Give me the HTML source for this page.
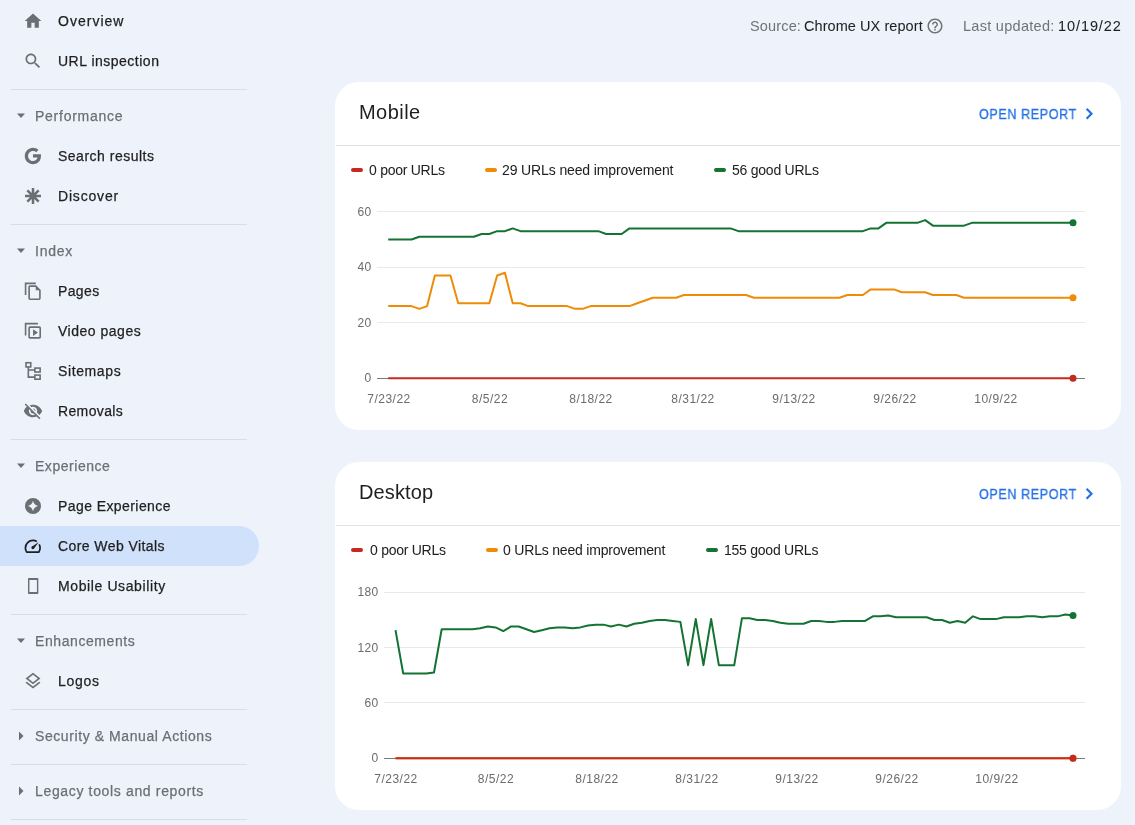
<!DOCTYPE html>
<html><head><meta charset="utf-8"><style>
html,body{margin:0;padding:0;width:1135px;height:825px;overflow:hidden;background:#eef3fb;font-family:"Liberation Sans", sans-serif;}
.t{position:absolute;white-space:pre;will-change:transform;}
.s{stroke:inherit}
</style></head><body>
<div style="position:absolute;left:0px;top:526px;width:259px;height:40px;background:#d0e1fc;border-radius:0 20px 20px 0"></div>
<div style="position:absolute;left:11px;top:89px;width:236px;height:1px;background:#dcdde1"></div>
<div style="position:absolute;left:11px;top:224px;width:236px;height:1px;background:#dcdde1"></div>
<div style="position:absolute;left:11px;top:439px;width:236px;height:1px;background:#dcdde1"></div>
<div style="position:absolute;left:11px;top:614px;width:236px;height:1px;background:#dcdde1"></div>
<div style="position:absolute;left:11px;top:709px;width:236px;height:1px;background:#dcdde1"></div>
<div style="position:absolute;left:11px;top:764px;width:236px;height:1px;background:#dcdde1"></div>
<div style="position:absolute;left:11px;top:819px;width:236px;height:1px;background:#dcdde1"></div>
<svg style="position:absolute;left:23px;top:11px;" width="20" height="20" viewBox="0 0 20 20"><g transform="scale(0.8333)" fill="#6b6e72" stroke="#6b6e72" stroke-width="0"><path d="M10 20v-6h4v6h5v-8h3L12 3 2 12h3v8z"/></g></svg>
<div class="t" style="left:58.40px;top:14.15px;font-size:14px;line-height:14px;color:#1f1f1f;font-weight:400;letter-spacing:1.014px;-webkit-text-stroke:0.25px #1f1f1f;">Overview</div>
<svg style="position:absolute;left:23px;top:51px;" width="20" height="20" viewBox="0 0 20 20"><g transform="scale(0.8333)" fill="#6b6e72" stroke="#6b6e72" stroke-width="0"><path d="M15.5 14h-.79l-.28-.27C15.41 12.59 16 11.11 16 9.5 16 5.91 13.09 3 9.5 3S3 5.91 3 9.5 5.91 16 9.5 16c1.61 0 3.09-.59 4.23-1.57l.27.28v.79l5 4.99L20.49 19l-4.99-5zm-6 0C7.01 14 5 11.99 5 9.5S7.01 5 9.5 5 14 7.01 14 9.5 11.99 14 9.5 14z"/></g></svg>
<div class="t" style="left:58.40px;top:54.15px;font-size:14px;line-height:14px;color:#1f1f1f;font-weight:400;letter-spacing:0.5px;-webkit-text-stroke:0.25px #1f1f1f;">URL inspection</div>
<svg style="position:absolute;left:23px;top:146px;" width="20" height="20" viewBox="0 0 20 20"><g transform="scale(0.8333)" fill="#6b6e72" stroke="#6b6e72" stroke-width="0"><g transform="translate(11.85 12) scale(1.1) translate(-11.85 -12)"><path d="M20.6 10.2H12v3.4h4.9c-.5 2.4-2.5 3.9-4.9 3.9-3 0-5.4-2.5-5.4-5.5S9 6.5 12 6.5c1.4 0 2.6.5 3.5 1.3l2.5-2.5C16.4 3.9 14.3 3 12 3 7 3 3 7 3 12s4 9 9 9c4.5 0 8.7-3.3 8.7-9 0-.6-.1-1.2-.1-1.8z"/></g></g></svg>
<div class="t" style="left:58.40px;top:149.15px;font-size:14px;line-height:14px;color:#1f1f1f;font-weight:400;letter-spacing:0.5px;-webkit-text-stroke:0.25px #1f1f1f;">Search results</div>
<svg style="position:absolute;left:23px;top:186px;" width="20" height="20" viewBox="0 0 20 20"><g transform="scale(0.8333)" fill="#6b6e72" stroke="#6b6e72" stroke-width="0"><g stroke-width="3" stroke-linecap="butt" fill="none" class="s"><path d="M12 2.4v19.2M2.4 12h19.2M5.2 5.2l13.6 13.6M18.8 5.2L5.2 18.8"/></g><circle cx="12" cy="12" r="3.4"/></g></svg>
<div class="t" style="left:58.40px;top:189.15px;font-size:14px;line-height:14px;color:#1f1f1f;font-weight:400;letter-spacing:0.814px;-webkit-text-stroke:0.25px #1f1f1f;">Discover</div>
<svg style="position:absolute;left:23px;top:281px;" width="20" height="20" viewBox="0 0 20 20"><g transform="scale(0.8333)" fill="#6b6e72" stroke="#6b6e72" stroke-width="0"><g fill="none" class="s" stroke-width="1.95"><path d="M3.1 16.7V2.9h12.3"/><path d="M8.35 6.15H15.3L20.3 11.15V20.85A1 1 0 0 1 19.3 21.85H8.35A1 1 0 0 1 7.35 20.85V7.15A1 1 0 0 1 8.35 6.15z"/></g><path d="M15.3 6.15L20.3 11.15H15.3z"/></g></svg>
<div class="t" style="left:58.40px;top:284.15px;font-size:14px;line-height:14px;color:#1f1f1f;font-weight:400;letter-spacing:0.375px;-webkit-text-stroke:0.25px #1f1f1f;">Pages</div>
<svg style="position:absolute;left:23px;top:321px;" width="20" height="20" viewBox="0 0 20 20"><g transform="scale(0.8333)" fill="#6b6e72" stroke="#6b6e72" stroke-width="0"><g fill="none" class="s" stroke-width="1.95"><path d="M3.1 17.5V3.2h14.8"/><rect x="7.35" y="7.35" width="13.3" height="12.9" rx="1"/></g><path d="M12.1 9.8V18L17.9 13.9z"/></g></svg>
<div class="t" style="left:58.40px;top:324.15px;font-size:14px;line-height:14px;color:#1f1f1f;font-weight:400;letter-spacing:0.51px;-webkit-text-stroke:0.25px #1f1f1f;">Video pages</div>
<svg style="position:absolute;left:23px;top:361px;" width="20" height="20" viewBox="0 0 20 20"><g transform="scale(0.8333)" fill="#6b6e72" stroke="#6b6e72" stroke-width="0"><g fill="none" class="s" stroke-width="1.9"><rect x="3.6" y="2.1" width="5.7" height="5.0"/><rect x="14.25" y="8.5" width="6.3" height="4.7"/><rect x="14.25" y="16.9" width="6.3" height="4.95"/><path d="M6.4 7.1V19.4h7.85M6.4 10.85h7.85"/></g></g></svg>
<div class="t" style="left:58.40px;top:364.15px;font-size:14px;line-height:14px;color:#1f1f1f;font-weight:400;letter-spacing:0.614px;-webkit-text-stroke:0.25px #1f1f1f;">Sitemaps</div>
<svg style="position:absolute;left:23px;top:401px;" width="20" height="20" viewBox="0 0 20 20"><g transform="scale(0.8333)" fill="#6b6e72" stroke="#6b6e72" stroke-width="0"><path d="M12 7c2.76 0 5 2.24 5 5 0 .65-.13 1.26-.36 1.83l2.92 2.92c1.51-1.26 2.7-2.89 3.43-4.75-1.730-4.39-6-7.5-11-7.5-1.4 0-2.74.25-3.98.7l2.16 2.16C10.74 7.13 11.35 7 12 7zM2 4.27l2.28 2.28.46.46C3.08 8.3 1.78 10.02 1 12c1.73 4.39 6 7.5 11 7.5 1.55 0 3.03-.3 4.38-.84l.42.42L19.73 22 21 20.73 3.27 3 2 4.270zM7.53 9.8l1.55 1.55c-.05.21-.08.43-.08.65 0 1.66 1.34 3 3 3 .22 0 .44-.03.65-.08l1.55 1.55c-.67.33-1.41.53-2.2.53-2.76 0-5-2.24-5-5 0-.79.2-1.53.53-2.2zm4.31-.78l3.15 3.15.02-.16c0-1.66-1.34-3-3-3l-.17.01z"/></g></svg>
<div class="t" style="left:58.40px;top:404.15px;font-size:14px;line-height:14px;color:#1f1f1f;font-weight:400;letter-spacing:0.357px;-webkit-text-stroke:0.25px #1f1f1f;">Removals</div>
<svg style="position:absolute;left:23px;top:496px;" width="20" height="20" viewBox="0 0 20 20"><g transform="scale(0.8333)" fill="#6b6e72" stroke="#6b6e72" stroke-width="0"><path fill-rule="evenodd" d="M12 2.4a9.6 9.6 0 1 0 0 19.2 9.6 9.6 0 0 0 0-19.2zM12 5.7C12.9 9.3 14.7 11.1 18.3 12C14.7 12.9 12.9 14.7 12 18.3C11.1 14.7 9.3 12.9 5.7 12C9.3 11.1 11.1 9.3 12 5.7z"/></g></svg>
<div class="t" style="left:58.40px;top:499.15px;font-size:14px;line-height:14px;color:#1f1f1f;font-weight:400;letter-spacing:0.421px;-webkit-text-stroke:0.25px #1f1f1f;">Page Experience</div>
<svg style="position:absolute;left:23px;top:536px;" width="20" height="20" viewBox="0 0 20 20"><g transform="scale(0.8333)" fill="#1f1f1f" stroke="#1f1f1f" stroke-width="0"><g fill="none" class="s" stroke-width="2.1"><path d="M4.5 19.5a8 8 0 0 1-1.6-5A9.1 9.1 0 0 1 12 5.4c1.7 0 3.2.4 4.5 1.2M19.4 10c.7 1.3 1.1 2.8 1.1 4.5 0 1.9-.6 3.6-1.6 5H4.5"/></g><circle cx="11.8" cy="14.1" r="1.75"/><path d="M10.57 12.84L18.9 7.2L13.03 15.36z"/></g></svg>
<div class="t" style="left:58.40px;top:539.15px;font-size:14px;line-height:14px;color:#1f1f1f;font-weight:400;letter-spacing:0.414px;-webkit-text-stroke:0.25px #1f1f1f;">Core Web Vitals</div>
<svg style="position:absolute;left:23px;top:576px;" width="20" height="20" viewBox="0 0 20 20"><g transform="scale(0.8333)" fill="#6b6e72" stroke="#6b6e72" stroke-width="0"><path fill-rule="evenodd" d="M6.9 2.5H17.5A.9.9 0 0 1 18.4 3.4V20.8A.9.9 0 0 1 17.5 21.7H6.9A.9.9 0 0 1 6 20.8V3.4A.9.9 0 0 1 6.9 2.5zM7.7 4.9V19.3H16.7V4.9z"/></g></svg>
<div class="t" style="left:58.40px;top:579.15px;font-size:14px;line-height:14px;color:#1f1f1f;font-weight:400;letter-spacing:0.607px;-webkit-text-stroke:0.25px #1f1f1f;">Mobile Usability</div>
<svg style="position:absolute;left:23px;top:671px;" width="20" height="20" viewBox="0 0 20 20"><g transform="scale(0.8333)" fill="#6b6e72" stroke="#6b6e72" stroke-width="0"><path d="M11.99 18.54l-7.37-5.73L3 14.07l9 7 9-7-1.63-1.27-7.38 5.74zM12 16l7.36-5.73L21 9l-9-7-9 7 1.63 1.27L12 16zm0-11.47L17.74 9 12 13.47 6.26 9 12 4.53z"/></g></svg>
<div class="t" style="left:58.40px;top:674.15px;font-size:14px;line-height:14px;color:#1f1f1f;font-weight:400;letter-spacing:0.725px;-webkit-text-stroke:0.25px #1f1f1f;">Logos</div>
<svg style="position:absolute;left:16px;top:113px;" width="10" height="6" viewBox="0 0 10 6"><path d="M1 0.5h8L5 5z" fill="#6b6e72"/></svg>
<div class="t" style="left:34.50px;top:109.45px;font-size:14px;line-height:14px;color:#6b6f74;font-weight:400;letter-spacing:0.74px;-webkit-text-stroke:0.25px #6b6f74;">Performance</div>
<svg style="position:absolute;left:16px;top:248px;" width="10" height="6" viewBox="0 0 10 6"><path d="M1 0.5h8L5 5z" fill="#6b6e72"/></svg>
<div class="t" style="left:34.50px;top:244.45px;font-size:14px;line-height:14px;color:#6b6f74;font-weight:400;letter-spacing:0.75px;-webkit-text-stroke:0.25px #6b6f74;">Index</div>
<svg style="position:absolute;left:16px;top:463px;" width="10" height="6" viewBox="0 0 10 6"><path d="M1 0.5h8L5 5z" fill="#6b6e72"/></svg>
<div class="t" style="left:34.50px;top:459.45px;font-size:14px;line-height:14px;color:#6b6f74;font-weight:400;letter-spacing:0.533px;-webkit-text-stroke:0.25px #6b6f74;">Experience</div>
<svg style="position:absolute;left:16px;top:638px;" width="10" height="6" viewBox="0 0 10 6"><path d="M1 0.5h8L5 5z" fill="#6b6e72"/></svg>
<div class="t" style="left:34.50px;top:634.45px;font-size:14px;line-height:14px;color:#6b6f74;font-weight:400;letter-spacing:0.582px;-webkit-text-stroke:0.25px #6b6f74;">Enhancements</div>
<svg style="position:absolute;left:18px;top:731px;" width="7" height="10" viewBox="0 0 7 10"><path d="M1 0.5v9L5.5 5z" fill="#6b6e72"/></svg>
<div class="t" style="left:34.50px;top:729.45px;font-size:14px;line-height:14px;color:#6b6f74;font-weight:400;letter-spacing:0.583px;-webkit-text-stroke:0.25px #6b6f74;">Security &amp; Manual Actions</div>
<svg style="position:absolute;left:18px;top:786px;" width="7" height="10" viewBox="0 0 7 10"><path d="M1 0.5v9L5.5 5z" fill="#6b6e72"/></svg>
<div class="t" style="left:34.50px;top:784.45px;font-size:14px;line-height:14px;color:#6b6f74;font-weight:400;letter-spacing:0.652px;-webkit-text-stroke:0.25px #6b6f74;">Legacy tools and reports</div>
<div class="t" style="left:749.70px;top:18.53px;font-size:14.5px;line-height:14.5px;color:#6f7378;font-weight:400;letter-spacing:0.15px;-webkit-text-stroke:0px #6f7378;">Source:</div>
<div class="t" style="left:803.80px;top:18.53px;font-size:14.5px;line-height:14.5px;color:#1f1f1f;font-weight:400;letter-spacing:0.067px;-webkit-text-stroke:0.05px #1f1f1f;">Chrome UX report</div>
<svg style="position:absolute;left:926.1px;top:16.6px;" width="18" height="18" viewBox="0 0 18 18"><g transform="scale(0.75)" fill="#6f7378"><path d="M11 18h2v-2h-2v2zm1-16C6.480 2 2 6.48 2 12s4.48 10 10 10 10-4.48 10-10S17.52 2 12 2zm0 18c-4.41 0-8-3.59-8-8s3.59-8 8-8 8 3.59 8 8-3.59 8-8 8zm0-14c-2.21 0-4 1.79-4 4h2c0-1.1.9-2 2-2s2 .9 2 2c0 2-3 1.75-3 5h2c0-2.25 3-2.5 3-5 0-2.21-1.79-4-4-4z"/></g></svg>
<div class="t" style="left:963.30px;top:18.53px;font-size:14.5px;line-height:14.5px;color:#6f7378;font-weight:400;letter-spacing:0.283px;-webkit-text-stroke:0px #6f7378;">Last updated:</div>
<div class="t" style="left:1057.90px;top:18.53px;font-size:14.5px;line-height:14.5px;color:#1f1f1f;font-weight:400;letter-spacing:0.914px;-webkit-text-stroke:0.05px #1f1f1f;">10/19/22</div>
<div style="position:absolute;left:335px;top:82px;width:786px;height:348px;background:#ffffff;border-radius:24px"></div>
<div style="position:absolute;left:336px;top:145px;width:784px;height:1px;background:#e3e3e3"></div>
<div class="t" style="left:359.00px;top:101.97px;font-size:20px;line-height:20px;color:#1f1f1f;font-weight:400;letter-spacing:0.46px;-webkit-text-stroke:0px #1f1f1f;">Mobile</div>
<div class="t" style="left:979.10px;top:107.15px;font-size:14px;line-height:14px;color:#2370e8;font-weight:400;letter-spacing:0.65px;-webkit-text-stroke:0.25px #2370e8;-webkit-text-stroke:0.3px #2370e8;transform:scaleX(0.9);transform-origin:0 0">OPEN REPORT</div>
<svg style="position:absolute;left:1079px;top:104px;" width="16" height="20" viewBox="0 0 16 20"><path d="M7.6 4.7L12.5 9.75L7.6 14.8" fill="none" stroke="#2370e8" stroke-width="2.2"/></svg>
<div style="position:absolute;left:351px;top:168px;width:12px;height:4px;background:#c42a1f;border-radius:2px"></div>
<div class="t" style="left:369.00px;top:163.45px;font-size:14px;line-height:14px;color:#1f1f1f;font-weight:400;letter-spacing:-0.27px;-webkit-text-stroke:0.03px #1f1f1f;">0 poor URLs</div>
<div style="position:absolute;left:484.8px;top:168px;width:12px;height:4px;background:#ef8b06;border-radius:2px"></div>
<div class="t" style="left:502.10px;top:163.45px;font-size:14px;line-height:14px;color:#1f1f1f;font-weight:400;letter-spacing:-0.122px;-webkit-text-stroke:0.03px #1f1f1f;">29 URLs need improvement</div>
<div style="position:absolute;left:714.3px;top:168px;width:12px;height:4px;background:#137333;border-radius:2px"></div>
<div class="t" style="left:731.90px;top:163.45px;font-size:14px;line-height:14px;color:#1f1f1f;font-weight:400;letter-spacing:-0.236px;-webkit-text-stroke:0.03px #1f1f1f;">56 good URLs</div>
<svg style="position:absolute;left:0;top:0" width="1135" height="825" viewBox="0 0 1135 825"><rect x="377" y="378" width="708" height="1" fill="#7a7a7a"/><rect x="377" y="322" width="708" height="1" fill="#e9e9e9"/><rect x="377" y="267" width="708" height="1" fill="#e9e9e9"/><rect x="377" y="211" width="708" height="1" fill="#e9e9e9"/>
<polyline points="388.20,239.50 395.98,239.50 403.76,239.50 411.55,239.50 419.33,236.73 427.11,236.73 434.89,236.73 442.67,236.73 450.45,236.73 458.24,236.73 466.02,236.73 473.80,236.73 481.58,233.95 489.36,233.95 497.15,231.18 504.93,231.18 512.71,228.40 520.49,231.18 528.27,231.18 536.05,231.18 543.84,231.18 551.62,231.18 559.40,231.18 567.18,231.18 574.96,231.18 582.75,231.18 590.53,231.18 598.31,231.18 606.09,233.95 613.87,233.95 621.65,233.95 629.44,228.40 637.22,228.40 645.00,228.40 652.78,228.40 660.56,228.40 668.35,228.40 676.13,228.40 683.91,228.40 691.69,228.40 699.47,228.40 707.25,228.40 715.04,228.40 722.82,228.40 730.60,228.40 738.38,231.18 746.16,231.18 753.95,231.18 761.73,231.18 769.51,231.18 777.29,231.18 785.07,231.18 792.85,231.18 800.64,231.18 808.42,231.18 816.20,231.18 823.98,231.18 831.76,231.18 839.55,231.18 847.33,231.18 855.11,231.18 862.89,231.18 870.67,228.40 878.45,228.40 886.24,222.86 894.02,222.86 901.80,222.86 909.58,222.86 917.36,222.86 925.15,220.08 932.93,225.63 940.71,225.63 948.49,225.63 956.27,225.63 964.05,225.63 971.84,222.86 979.62,222.86 987.40,222.86 995.18,222.86 1002.96,222.86 1010.75,222.86 1018.53,222.86 1026.31,222.86 1034.09,222.86 1041.87,222.86 1049.65,222.86 1057.44,222.86 1065.22,222.86 1073.00,222.86" fill="none" stroke="#137333" stroke-width="2" stroke-linejoin="round"/>
<circle cx="1073" cy="222.86" r="3.5" fill="#137333"/>
<polyline points="388.20,306.08 395.98,306.08 403.76,306.08 411.55,306.08 419.33,308.85 427.11,306.08 434.89,275.56 442.67,275.56 450.45,275.56 458.24,303.30 466.02,303.30 473.80,303.30 481.58,303.30 489.36,303.30 497.15,275.56 504.93,272.79 512.71,303.30 520.49,303.30 528.27,306.08 536.05,306.08 543.84,306.08 551.62,306.08 559.40,306.08 567.18,306.08 574.96,308.85 582.75,308.85 590.53,306.08 598.31,306.08 606.09,306.08 613.87,306.08 621.65,306.08 629.44,306.08 637.22,303.30 645.00,300.53 652.78,297.75 660.56,297.75 668.35,297.75 676.13,297.75 683.91,294.98 691.69,294.98 699.47,294.98 707.25,294.98 715.04,294.98 722.82,294.98 730.60,294.98 738.38,294.98 746.16,294.98 753.95,297.75 761.73,297.75 769.51,297.75 777.29,297.75 785.07,297.75 792.85,297.75 800.64,297.75 808.42,297.75 816.20,297.75 823.98,297.75 831.76,297.75 839.55,297.75 847.33,294.98 855.11,294.98 862.89,294.98 870.67,289.43 878.45,289.43 886.24,289.43 894.02,289.43 901.80,292.21 909.58,292.21 917.36,292.21 925.15,292.21 932.93,294.98 940.71,294.98 948.49,294.98 956.27,294.98 964.05,297.75 971.84,297.75 979.62,297.75 987.40,297.75 995.18,297.75 1002.96,297.75 1010.75,297.75 1018.53,297.75 1026.31,297.75 1034.09,297.75 1041.87,297.75 1049.65,297.75 1057.44,297.75 1065.22,297.75 1073.00,297.75" fill="none" stroke="#ef8b06" stroke-width="2" stroke-linejoin="round"/>
<circle cx="1073" cy="297.75" r="3.5" fill="#ef8b06"/>
<polyline points="388.20,378.20 395.98,378.20 403.76,378.20 411.55,378.20 419.33,378.20 427.11,378.20 434.89,378.20 442.67,378.20 450.45,378.20 458.24,378.20 466.02,378.20 473.80,378.20 481.58,378.20 489.36,378.20 497.15,378.20 504.93,378.20 512.71,378.20 520.49,378.20 528.27,378.20 536.05,378.20 543.84,378.20 551.62,378.20 559.40,378.20 567.18,378.20 574.96,378.20 582.75,378.20 590.53,378.20 598.31,378.20 606.09,378.20 613.87,378.20 621.65,378.20 629.44,378.20 637.22,378.20 645.00,378.20 652.78,378.20 660.56,378.20 668.35,378.20 676.13,378.20 683.91,378.20 691.69,378.20 699.47,378.20 707.25,378.20 715.04,378.20 722.82,378.20 730.60,378.20 738.38,378.20 746.16,378.20 753.95,378.20 761.73,378.20 769.51,378.20 777.29,378.20 785.07,378.20 792.85,378.20 800.64,378.20 808.42,378.20 816.20,378.20 823.98,378.20 831.76,378.20 839.55,378.20 847.33,378.20 855.11,378.20 862.89,378.20 870.67,378.20 878.45,378.20 886.24,378.20 894.02,378.20 901.80,378.20 909.58,378.20 917.36,378.20 925.15,378.20 932.93,378.20 940.71,378.20 948.49,378.20 956.27,378.20 964.05,378.20 971.84,378.20 979.62,378.20 987.40,378.20 995.18,378.20 1002.96,378.20 1010.75,378.20 1018.53,378.20 1026.31,378.20 1034.09,378.20 1041.87,378.20 1049.65,378.20 1057.44,378.20 1065.22,378.20 1073.00,378.20" fill="none" stroke="#c42a1f" stroke-width="2" stroke-linejoin="round"/>
<circle cx="1073" cy="378.20" r="3.5" fill="#c42a1f"/>
</svg>
<div class="t" style="left:0.00px;top:372.24px;font-size:12px;line-height:12px;color:#6b6b6b;font-weight:400;letter-spacing:0.4px;-webkit-text-stroke:0px #6b6b6b;width:371.70px;text-align:right">0</div>
<div class="t" style="left:0.00px;top:316.76px;font-size:12px;line-height:12px;color:#6b6b6b;font-weight:400;letter-spacing:0.4px;-webkit-text-stroke:0px #6b6b6b;width:371.70px;text-align:right">20</div>
<div class="t" style="left:0.00px;top:261.28px;font-size:12px;line-height:12px;color:#6b6b6b;font-weight:400;letter-spacing:0.4px;-webkit-text-stroke:0px #6b6b6b;width:371.70px;text-align:right">40</div>
<div class="t" style="left:0.00px;top:205.80px;font-size:12px;line-height:12px;color:#6b6b6b;font-weight:400;letter-spacing:0.4px;-webkit-text-stroke:0px #6b6b6b;width:371.70px;text-align:right">60</div>
<div class="t" style="left:349.05px;top:392.94px;font-size:12px;line-height:12px;color:#6b6b6b;font-weight:400;letter-spacing:0.5px;-webkit-text-stroke:0px #6b6b6b;width:80px;text-align:center">7/23/22</div>
<div class="t" style="left:450.21px;top:392.94px;font-size:12px;line-height:12px;color:#6b6b6b;font-weight:400;letter-spacing:0.5px;-webkit-text-stroke:0px #6b6b6b;width:80px;text-align:center">8/5/22</div>
<div class="t" style="left:551.38px;top:392.94px;font-size:12px;line-height:12px;color:#6b6b6b;font-weight:400;letter-spacing:0.5px;-webkit-text-stroke:0px #6b6b6b;width:80px;text-align:center">8/18/22</div>
<div class="t" style="left:652.54px;top:392.94px;font-size:12px;line-height:12px;color:#6b6b6b;font-weight:400;letter-spacing:0.5px;-webkit-text-stroke:0px #6b6b6b;width:80px;text-align:center">8/31/22</div>
<div class="t" style="left:753.70px;top:392.94px;font-size:12px;line-height:12px;color:#6b6b6b;font-weight:400;letter-spacing:0.5px;-webkit-text-stroke:0px #6b6b6b;width:80px;text-align:center">9/13/22</div>
<div class="t" style="left:854.87px;top:392.94px;font-size:12px;line-height:12px;color:#6b6b6b;font-weight:400;letter-spacing:0.5px;-webkit-text-stroke:0px #6b6b6b;width:80px;text-align:center">9/26/22</div>
<div class="t" style="left:956.03px;top:392.94px;font-size:12px;line-height:12px;color:#6b6b6b;font-weight:400;letter-spacing:0.5px;-webkit-text-stroke:0px #6b6b6b;width:80px;text-align:center">10/9/22</div>
<div style="position:absolute;left:335px;top:462px;width:786px;height:348px;background:#ffffff;border-radius:24px"></div>
<div style="position:absolute;left:336px;top:525px;width:784px;height:1px;background:#e3e3e3"></div>
<div class="t" style="left:359.00px;top:481.97px;font-size:20px;line-height:20px;color:#1f1f1f;font-weight:400;letter-spacing:0.117px;-webkit-text-stroke:0px #1f1f1f;">Desktop</div>
<div class="t" style="left:979.10px;top:487.15px;font-size:14px;line-height:14px;color:#2370e8;font-weight:400;letter-spacing:0.65px;-webkit-text-stroke:0.25px #2370e8;-webkit-text-stroke:0.3px #2370e8;transform:scaleX(0.9);transform-origin:0 0">OPEN REPORT</div>
<svg style="position:absolute;left:1079px;top:484px;" width="16" height="20" viewBox="0 0 16 20"><path d="M7.6 4.7L12.5 9.75L7.6 14.8" fill="none" stroke="#2370e8" stroke-width="2.2"/></svg>
<div style="position:absolute;left:351px;top:548px;width:12px;height:4px;background:#c42a1f;border-radius:2px"></div>
<div class="t" style="left:369.50px;top:543.45px;font-size:14px;line-height:14px;color:#1f1f1f;font-weight:400;letter-spacing:-0.27px;-webkit-text-stroke:0.03px #1f1f1f;">0 poor URLs</div>
<div style="position:absolute;left:485.5px;top:548px;width:12px;height:4px;background:#ef8b06;border-radius:2px"></div>
<div class="t" style="left:502.70px;top:543.45px;font-size:14px;line-height:14px;color:#1f1f1f;font-weight:400;letter-spacing:-0.191px;-webkit-text-stroke:0.03px #1f1f1f;">0 URLs need improvement</div>
<div style="position:absolute;left:706.1px;top:548px;width:12px;height:4px;background:#137333;border-radius:2px"></div>
<div class="t" style="left:724.00px;top:543.45px;font-size:14px;line-height:14px;color:#1f1f1f;font-weight:400;letter-spacing:-0.242px;-webkit-text-stroke:0.03px #1f1f1f;">155 good URLs</div>
<svg style="position:absolute;left:0;top:0" width="1135" height="825" viewBox="0 0 1135 825"><rect x="384" y="758" width="701" height="1" fill="#7a7a7a"/><rect x="384" y="702" width="701" height="1" fill="#e9e9e9"/><rect x="384" y="647" width="701" height="1" fill="#e9e9e9"/><rect x="384" y="592" width="701" height="1" fill="#e9e9e9"/>
<polyline points="395.50,630.17 403.20,673.46 410.90,673.46 418.60,673.46 426.30,673.46 433.99,672.54 441.69,629.24 449.39,629.24 457.09,629.24 464.79,629.24 472.49,629.24 480.19,628.32 487.89,626.48 495.59,627.40 503.28,631.09 510.98,626.48 518.68,626.48 526.38,629.24 534.08,632.01 541.78,630.17 549.48,628.32 557.18,627.40 564.88,627.40 572.57,628.32 580.27,627.40 587.97,625.56 595.67,624.64 603.37,624.64 611.07,626.48 618.77,624.64 626.47,626.48 634.16,623.72 641.86,622.80 649.56,620.95 657.26,620.03 664.96,620.03 672.66,620.95 680.36,621.88 688.06,665.17 695.76,619.11 703.45,665.17 711.15,619.11 718.85,665.17 726.55,665.17 734.25,665.17 741.95,618.19 749.65,618.19 757.35,620.03 765.05,620.03 772.74,620.95 780.44,622.80 788.14,623.72 795.84,623.72 803.54,623.72 811.24,620.95 818.94,620.95 826.64,621.88 834.34,621.88 842.03,620.95 849.73,620.95 857.43,620.95 865.13,620.95 872.83,616.35 880.53,616.35 888.23,615.43 895.93,617.27 903.62,617.27 911.32,617.27 919.02,617.27 926.72,617.27 934.42,620.03 942.12,620.03 949.82,622.80 957.52,620.95 965.22,622.80 972.91,616.35 980.61,619.11 988.31,619.11 996.01,619.11 1003.71,617.27 1011.41,617.27 1019.11,617.27 1026.81,616.35 1034.51,616.35 1042.20,617.27 1049.90,616.35 1057.60,616.35 1065.30,614.51 1073.00,615.43" fill="none" stroke="#137333" stroke-width="2" stroke-linejoin="round"/>
<circle cx="1073" cy="615.43" r="3.5" fill="#137333"/>
<polyline points="395.50,758.20 403.20,758.20 410.90,758.20 418.60,758.20 426.30,758.20 433.99,758.20 441.69,758.20 449.39,758.20 457.09,758.20 464.79,758.20 472.49,758.20 480.19,758.20 487.89,758.20 495.59,758.20 503.28,758.20 510.98,758.20 518.68,758.20 526.38,758.20 534.08,758.20 541.78,758.20 549.48,758.20 557.18,758.20 564.88,758.20 572.57,758.20 580.27,758.20 587.97,758.20 595.67,758.20 603.37,758.20 611.07,758.20 618.77,758.20 626.47,758.20 634.16,758.20 641.86,758.20 649.56,758.20 657.26,758.20 664.96,758.20 672.66,758.20 680.36,758.20 688.06,758.20 695.76,758.20 703.45,758.20 711.15,758.20 718.85,758.20 726.55,758.20 734.25,758.20 741.95,758.20 749.65,758.20 757.35,758.20 765.05,758.20 772.74,758.20 780.44,758.20 788.14,758.20 795.84,758.20 803.54,758.20 811.24,758.20 818.94,758.20 826.64,758.20 834.34,758.20 842.03,758.20 849.73,758.20 857.43,758.20 865.13,758.20 872.83,758.20 880.53,758.20 888.23,758.20 895.93,758.20 903.62,758.20 911.32,758.20 919.02,758.20 926.72,758.20 934.42,758.20 942.12,758.20 949.82,758.20 957.52,758.20 965.22,758.20 972.91,758.20 980.61,758.20 988.31,758.20 996.01,758.20 1003.71,758.20 1011.41,758.20 1019.11,758.20 1026.81,758.20 1034.51,758.20 1042.20,758.20 1049.90,758.20 1057.60,758.20 1065.30,758.20 1073.00,758.20" fill="none" stroke="#ef8b06" stroke-width="2" stroke-linejoin="round"/>
<circle cx="1073" cy="758.20" r="3.5" fill="#ef8b06"/>
<polyline points="395.50,758.20 403.20,758.20 410.90,758.20 418.60,758.20 426.30,758.20 433.99,758.20 441.69,758.20 449.39,758.20 457.09,758.20 464.79,758.20 472.49,758.20 480.19,758.20 487.89,758.20 495.59,758.20 503.28,758.20 510.98,758.20 518.68,758.20 526.38,758.20 534.08,758.20 541.78,758.20 549.48,758.20 557.18,758.20 564.88,758.20 572.57,758.20 580.27,758.20 587.97,758.20 595.67,758.20 603.37,758.20 611.07,758.20 618.77,758.20 626.47,758.20 634.16,758.20 641.86,758.20 649.56,758.20 657.26,758.20 664.96,758.20 672.66,758.20 680.36,758.20 688.06,758.20 695.76,758.20 703.45,758.20 711.15,758.20 718.85,758.20 726.55,758.20 734.25,758.20 741.95,758.20 749.65,758.20 757.35,758.20 765.05,758.20 772.74,758.20 780.44,758.20 788.14,758.20 795.84,758.20 803.54,758.20 811.24,758.20 818.94,758.20 826.64,758.20 834.34,758.20 842.03,758.20 849.73,758.20 857.43,758.20 865.13,758.20 872.83,758.20 880.53,758.20 888.23,758.20 895.93,758.20 903.62,758.20 911.32,758.20 919.02,758.20 926.72,758.20 934.42,758.20 942.12,758.20 949.82,758.20 957.52,758.20 965.22,758.20 972.91,758.20 980.61,758.20 988.31,758.20 996.01,758.20 1003.71,758.20 1011.41,758.20 1019.11,758.20 1026.81,758.20 1034.51,758.20 1042.20,758.20 1049.90,758.20 1057.60,758.20 1065.30,758.20 1073.00,758.20" fill="none" stroke="#c42a1f" stroke-width="2" stroke-linejoin="round"/>
<circle cx="1073" cy="758.20" r="3.5" fill="#c42a1f"/>
</svg>
<div class="t" style="left:0.00px;top:752.24px;font-size:12px;line-height:12px;color:#6b6b6b;font-weight:400;letter-spacing:0.4px;-webkit-text-stroke:0px #6b6b6b;width:378.70px;text-align:right">0</div>
<div class="t" style="left:0.00px;top:696.98px;font-size:12px;line-height:12px;color:#6b6b6b;font-weight:400;letter-spacing:0.4px;-webkit-text-stroke:0px #6b6b6b;width:378.70px;text-align:right">60</div>
<div class="t" style="left:0.00px;top:641.71px;font-size:12px;line-height:12px;color:#6b6b6b;font-weight:400;letter-spacing:0.4px;-webkit-text-stroke:0px #6b6b6b;width:378.70px;text-align:right">120</div>
<div class="t" style="left:0.00px;top:586.44px;font-size:12px;line-height:12px;color:#6b6b6b;font-weight:400;letter-spacing:0.4px;-webkit-text-stroke:0px #6b6b6b;width:378.70px;text-align:right">180</div>
<div class="t" style="left:356.35px;top:772.94px;font-size:12px;line-height:12px;color:#6b6b6b;font-weight:400;letter-spacing:0.5px;-webkit-text-stroke:0px #6b6b6b;width:80px;text-align:center">7/23/22</div>
<div class="t" style="left:456.44px;top:772.94px;font-size:12px;line-height:12px;color:#6b6b6b;font-weight:400;letter-spacing:0.5px;-webkit-text-stroke:0px #6b6b6b;width:80px;text-align:center">8/5/22</div>
<div class="t" style="left:556.52px;top:772.94px;font-size:12px;line-height:12px;color:#6b6b6b;font-weight:400;letter-spacing:0.5px;-webkit-text-stroke:0px #6b6b6b;width:80px;text-align:center">8/18/22</div>
<div class="t" style="left:656.61px;top:772.94px;font-size:12px;line-height:12px;color:#6b6b6b;font-weight:400;letter-spacing:0.5px;-webkit-text-stroke:0px #6b6b6b;width:80px;text-align:center">8/31/22</div>
<div class="t" style="left:756.69px;top:772.94px;font-size:12px;line-height:12px;color:#6b6b6b;font-weight:400;letter-spacing:0.5px;-webkit-text-stroke:0px #6b6b6b;width:80px;text-align:center">9/13/22</div>
<div class="t" style="left:856.78px;top:772.94px;font-size:12px;line-height:12px;color:#6b6b6b;font-weight:400;letter-spacing:0.5px;-webkit-text-stroke:0px #6b6b6b;width:80px;text-align:center">9/26/22</div>
<div class="t" style="left:956.86px;top:772.94px;font-size:12px;line-height:12px;color:#6b6b6b;font-weight:400;letter-spacing:0.5px;-webkit-text-stroke:0px #6b6b6b;width:80px;text-align:center">10/9/22</div>
</body></html>
